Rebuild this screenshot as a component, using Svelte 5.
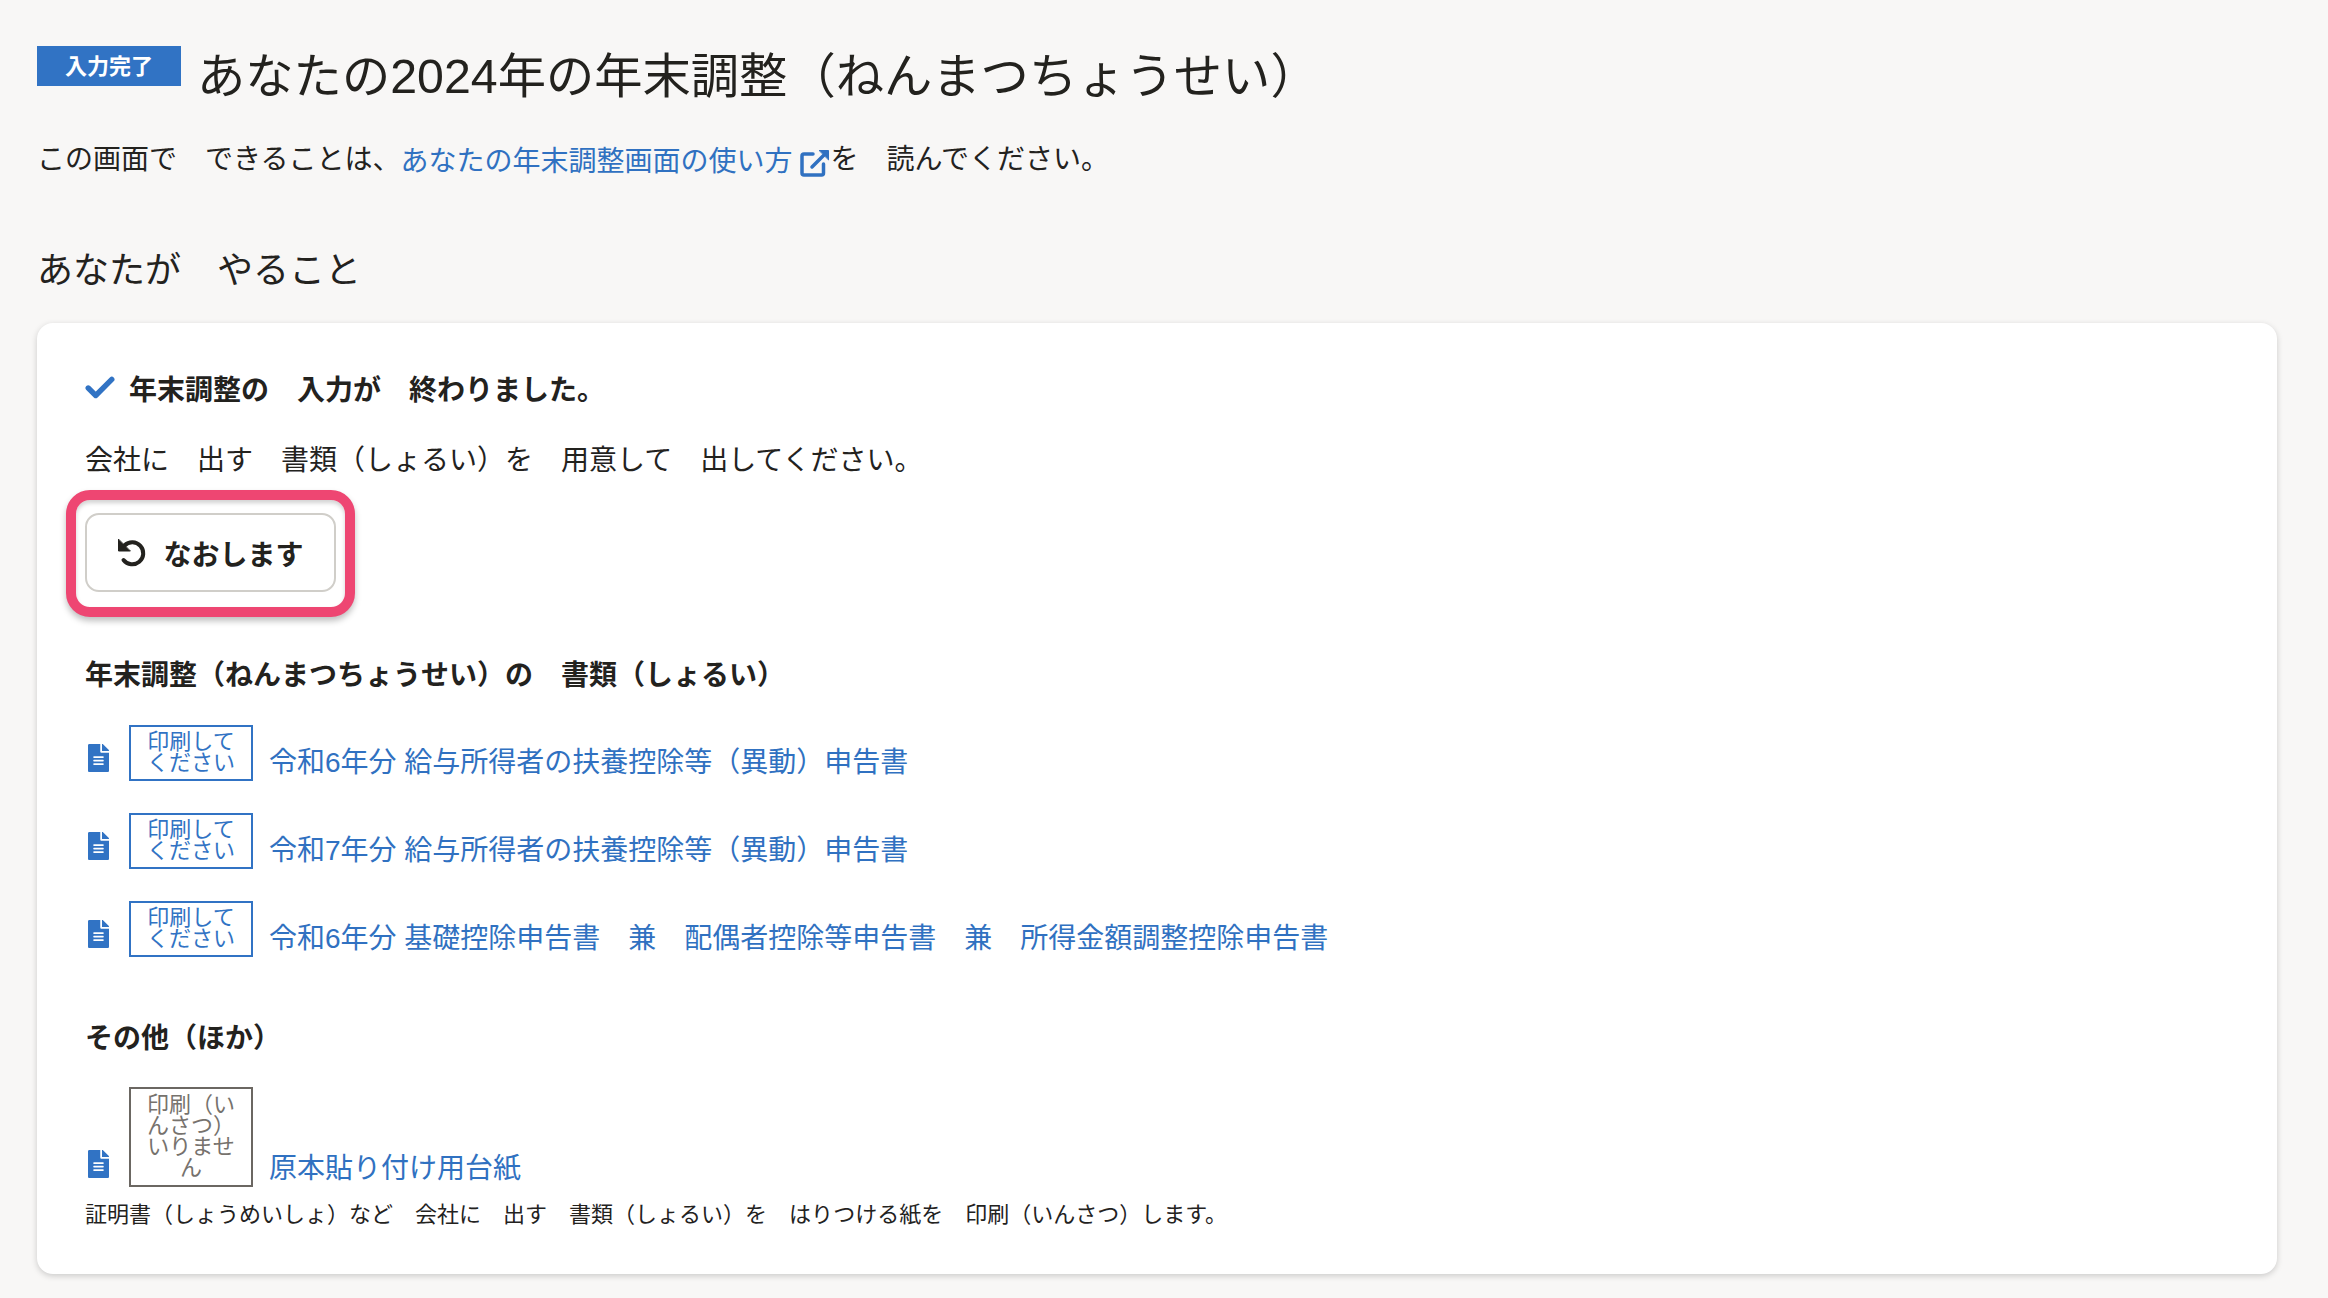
<script lang="ts">
  const docs = [
    '令和6年分 給与所得者の扶養控除等（異動）申告書',
    '令和7年分 給与所得者の扶養控除等（異動）申告書',
    '令和6年分 基礎控除申告書　兼　配偶者控除等申告書　兼　所得金額調整控除申告書',
  ];
</script>

{#snippet fileIcon()}
  <svg class="file-icon" viewBox="0 0 384 512" aria-hidden="true">
    <path d="M224 136V0H24C10.7 0 0 10.7 0 24v464c0 13.3 10.7 24 24 24h336c13.3 0 24-10.7 24-24V160H248c-13.2 0-24-10.8-24-24zm64 236c0 6.600-5.400 12-12 12H108c-6.600 0-12-5.400-12-12v-8c0-6.600 5.400-12 12-12h168c6.600 0 12 5.400 12 12v8zm0-64c0 6.600-5.400 12-12 12H108c-6.600 0-12-5.400-12-12v-8c0-6.600 5.400-12 12-12h168c6.600 0 12 5.400 12 12v8zm0-72v8c0 6.600-5.400 12-12 12H108c-6.600 0-12-5.400-12-12v-8c0-6.600 5.400-12 12-12h168c6.600 0 12 5.400 12 12zm96-114.100v6.100H256V0h6.100c6.400 0 12.500 2.500 17 7l97.900 98c4.500 4.500 7 10.600 7 16.900z" />
  </svg>
{/snippet}

<main class="page">
  <header class="title-row">
    <span class="status">入力完了</span>
    <h1>あなたの2024年の年末調整（ねんまつちょうせい）</h1>
  </header>

  <p class="lead">
    この画面で　できることは、<a href="#help">あなたの年末調整画面の使い方<svg class="ext" viewBox="0 0 30 28" aria-hidden="true"><path d="M13 5H4a2 2 0 0 0-2 2v17a2 2 0 0 0 2 2h17.500a2 2 0 0 0 2-2V15M27 3 12 18" /><path class="ext-head" d="M19.500 1.500H28.500V10.500Z" /></svg></a>を　読んでください。
  </p>

  <h2>あなたが　やること</h2>

  <section class="card">
    <p class="done">
      <svg class="check" viewBox="0 0 28 22" aria-hidden="true"><path d="M3 11 10 18 25 3" /></svg>
      年末調整の　入力が　終わりました。
    </p>
    <p class="note">会社に　出す　書類（しょるい）を　用意して　出してください。</p>

    <div class="focus-ring">
      <button type="button" class="redo">
        <svg viewBox="0 0 30 30" aria-hidden="true"><path d="M7.500 7.500A11 11 0 1 1 6.500 22" /><path class="redo-head" d="M1.500 1.500V13H13Z" /></svg>
        なおします
      </button>
    </div>

    <h3>年末調整（ねんまつちょうせい）の　書類（しょるい）</h3>

    <ul class="docs">
      {#each docs as doc}
        <li>
          {@render fileIcon()}
          <span class="tag">印刷して<br />ください</span>
          <a href="#doc">{doc}</a>
        </li>
      {/each}
    </ul>

    <h3 class="other">その他（ほか）</h3>

    <div class="extra">
      {@render fileIcon()}
      <span class="tag muted">印刷（いんさつ）いりません</span>
      <a href="#doc">原本貼り付け用台紙</a>
    </div>
    <p class="small">証明書（しょうめいしょ）など　会社に　出す　書類（しょるい）を　はりつける紙を　印刷（いんさつ）します。</p>
  </section>
</main>

<style>
  :global(body) {
    margin: 0;
    background: #f8f7f6;
    color: #23221e;
    font-family: 'Liberation Sans', 'Noto Sans CJK JP', sans-serif;
  }

  .page {
    padding: 37px 51px 25px 37px;
  }

  .title-row {
    display: flex;
    align-items: flex-start;
    gap: 16px;
  }

  .status {
    box-sizing: border-box;
    width: 144px;
    height: 40px;
    margin-top: 9px;
    padding-bottom: 4px;
    display: flex;
    align-items: center;
    justify-content: center;
    background: #3173c4;
    color: #fff;
    font-size: 22px;
    font-weight: 700;
    flex: none;
  }

  h1 {
    margin: 4px 0 0;
    font-size: 48.3px;
    line-height: 70px;
    font-weight: 400;
  }

  .lead {
    margin: 28px 0 0;
    font-size: 28px;
    line-height: 42px;
  }

  a {
    color: #3071c1;
    text-decoration: none;
  }

  .lead a {
    vertical-align: -2px;
  }

  .ext {
    width: 30px;
    height: 28px;
    margin-left: 8px;
    vertical-align: -6px;
    fill: none;
    stroke: #3071c1;
    stroke-width: 3.500;
    stroke-linecap: round;
  }

  .ext-head {
    fill: #3071c1;
    stroke-width: 1;
  }

  h2 {
    margin: 61px 0 0;
    font-size: 36px;
    line-height: 54px;
    font-weight: 400;
  }

  .card {
    margin-top: 25px;
    padding: 47px 48px 43px;
    background: #fff;
    border-radius: 16px;
    box-shadow: 0 2px 6px rgba(0, 0, 0, 0.18);
  }

  .card p {
    margin: 0;
  }

  .done {
    display: flex;
    align-items: center;
    gap: 14px;
    font-size: 28px;
    line-height: 42px;
    font-weight: 700;
  }

  .check {
    width: 30px;
    height: 24px;
    margin-top: -6px;
    fill: none;
    stroke: #3173c4;
    stroke-width: 5;
    stroke-linecap: round;
    stroke-linejoin: round;
    flex: none;
  }

  .card .note {
    margin-top: 28px;
    font-size: 28px;
    line-height: 42px;
  }

  .focus-ring {
    width: fit-content;
    margin: 8px 0 0 -19px;
    padding: 13px 9px 15px;
    border: 10px solid #ee4672;
    border-radius: 24px;
    box-shadow: 0 4px 6px rgba(0, 0, 0, 0.25), inset 0 3px 4px rgba(0, 0, 0, 0.18);
    background: #fff;
  }

  .redo {
    display: flex;
    align-items: center;
    justify-content: center;
    gap: 16px;
    width: 251px;
    height: 79px;
    padding: 0;
    background: #fff;
    border: 2px solid #d0cec9;
    border-radius: 14px;
    font: 700 28px 'Liberation Sans', 'Noto Sans CJK JP', sans-serif;
    color: #23221e;
    white-space: nowrap;
  }

  .redo svg {
    width: 30px;
    height: 30px;
    fill: none;
    stroke: #23221e;
    stroke-width: 4;
    stroke-linecap: round;
  }

  .redo-head {
    fill: #23221e;
    stroke-width: 1;
  }

  h3 {
    margin: 38px 0 0;
    font-size: 28px;
    line-height: 42px;
    font-weight: 700;
  }

  .docs {
    list-style: none;
    margin: 28px 0 0;
    padding: 0;
    display: flex;
    flex-direction: column;
    gap: 32px;
  }

  .docs li,
  .extra {
    display: flex;
    align-items: flex-end;
  }

  .file-icon {
    width: 21px;
    height: 28px;
    margin: 0 20px 9px 3px;
    fill: #3173c4;
    flex: none;
  }

  .tag {
    width: 124px;
    box-sizing: border-box;
    padding: 4px 12px 6px;
    border: 2px solid #3173c4;
    color: #3173c4;
    font-size: 22px;
    line-height: 21px;
    text-align: center;
    margin-right: 16px;
    flex: none;
  }

  .tag.muted {
    padding: 5px 12px 7px;
    border-color: #6b6762;
    color: #76726d;
  }

  .docs a,
  .extra a {
    font-size: 28px;
    line-height: 42px;
    margin-bottom: -3px;
  }

  .other {
    margin-top: 61px;
  }

  .extra {
    margin-top: 27px;
  }

  .card .small {
    margin-top: 12px;
    font-size: 22px;
    line-height: 32px;
  }
</style>
